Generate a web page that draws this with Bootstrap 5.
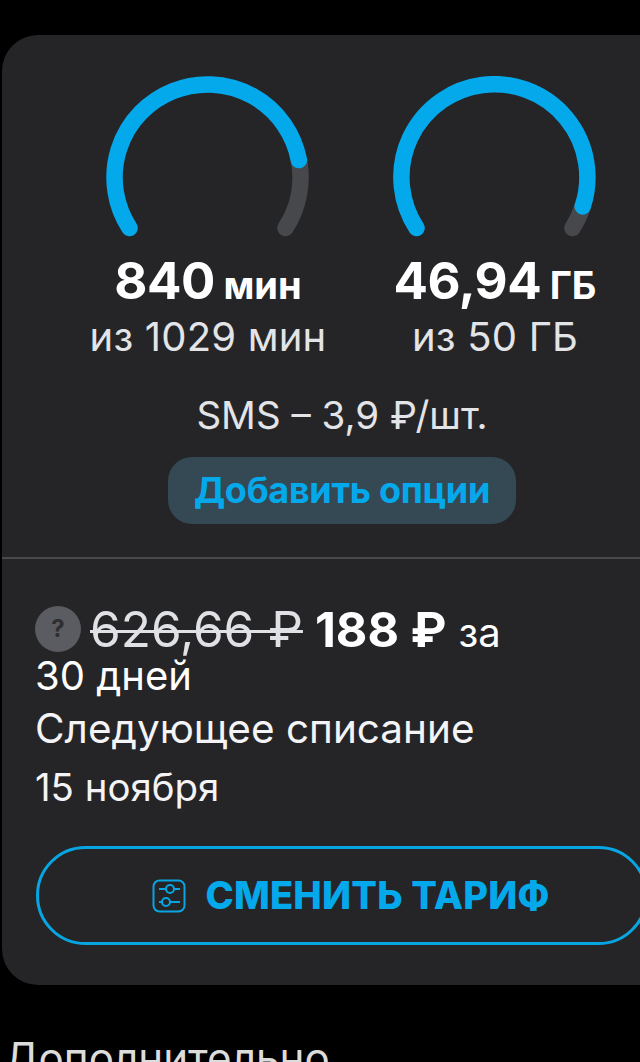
<!DOCTYPE html>
<html lang="ru">
<head>
<meta charset="utf-8">
<title>Тариф</title>
<link href="https://cdn.jsdelivr.net/npm/bootstrap@5.3.0/dist/css/bootstrap.min.css" rel="stylesheet">
<style>
html,body{background:#000;height:1062px;overflow:hidden}
body{font-family:"Inter","Noto Sans",sans-serif;color:#fff;padding-top:35px}
.tariff-panel{width:680px;margin-left:2px;height:950px;background:#252527;border-radius:36px 0 0 36px;overflow:hidden}
.gauges{padding:41px 0 0 62.5px}
.gauge-col{width:287px;text-align:center}
.gauge-svg{display:block;margin:0 auto;width:204px;height:162px}
.g-track{fill:none;stroke:#47484c;stroke-width:16.5;stroke-linecap:round}
.g-fill{fill:none;stroke:#04a9ec;stroke-width:16.5;stroke-linecap:round}
.val-line{font-weight:700;font-size:51px;line-height:50px;margin-top:18px;letter-spacing:-.5px;white-space:nowrap;word-spacing:-3px}
.val-line span{font-size:38px;letter-spacing:0}
.of-line{font-size:40px;line-height:44px;margin-top:5px;color:#e3e4e8;white-space:nowrap;letter-spacing:.2px}
.sms-line{font-size:38.5px;line-height:44px;margin-top:34px;color:#e3e4e8}
.opt-btn{display:block;width:348px;height:67px;margin:20px auto 0;padding:0;background:#344954;color:#04a9ec;font-weight:700;font-size:36px;line-height:67px;border:0;border-radius:24px;letter-spacing:-.3px;white-space:nowrap}
.divider{height:2px;background:#48494c;margin-top:33px}
.price-block{padding:47px 0 0 33px;width:520px;font-size:40px;line-height:43px}
.help-dot{display:inline-block;width:46px;height:46px;line-height:46px;border-radius:50%;background:#5b5c61;color:#2e2e31;font-size:24px;font-weight:700;text-align:center;vertical-align:10px;margin-right:9px}
.old-price{font-size:49.5px;color:#e0e1e5;text-decoration:line-through;text-decoration-thickness:3px}
.new-price{font-size:48.5px;font-weight:700;margin:0 12px}
.next-line{font-size:40.5px;line-height:46px;margin-top:9px;color:#f4f4f6;white-space:nowrap}
.date-line{font-size:38.4px;line-height:46px;margin-top:12px;color:#f4f4f6}
.switch-btn{width:612px;height:99px;margin:36px 0 0 34px;padding:0 0 0 18px;background:transparent;border:3px solid #08a5e3;border-radius:50px;color:#04a9ec;font-weight:800;font-size:38px;letter-spacing:.2px;white-space:nowrap}
.switch-btn svg{width:34px;height:34px;margin-right:19px;flex:none}
.more-title{font-size:42.2px;line-height:50px;color:#dcdcdc;margin:48px 0 0 4px;white-space:nowrap}
</style>
</head>
<body>
<div class="tariff-panel">
  <div class="gauges d-flex">
    <div class="gauge-col">
      <svg class="gauge-svg" viewBox="0 0 204 162"><path class="g-track" d="M192.9 84.1A93 93 0 0 1 179.5 152"/><path class="g-fill" d="M23.5 152A93 93 0 1 1 192.9 84.1"/></svg>
      <div class="val-line">840 <span>мин</span></div>
      <div class="of-line">из 1029 мин</div>
    </div>
    <div class="gauge-col">
      <svg class="gauge-svg" viewBox="0 0 204 162"><path class="g-track" d="M189.7 130.4A93 93 0 0 1 179.5 152"/><path class="g-fill" d="M23.5 152A93 93 0 1 1 189.7 130.4"/></svg>
      <div class="val-line">46,94 <span>ГБ</span></div>
      <div class="of-line">из 50 ГБ</div>
    </div>
  </div>
  <div class="sms-line text-center">SMS – 3,9 ₽/шт.</div>
  <button type="button" class="btn opt-btn">Добавить опции</button>
  <div class="divider"></div>
  <div class="price-block">
    <span class="help-dot">?</span><span class="old-price">626,66 ₽</span><span class="new-price">188 ₽</span>за 30 дней
    <div class="next-line">Следующее списание</div>
    <div class="date-line">15 ноября</div>
  </div>
  <button type="button" class="btn switch-btn d-flex align-items-center justify-content-center">
    <svg viewBox="0 0 34 34" fill="none" stroke="#08a5e3" stroke-width="2"><rect x="1.5" y="1.5" width="31" height="31" rx="6"/><path d="M7 10h7M22 10h6M7 23h3M18 23h10"/><circle cx="18" cy="10" r="4"/><circle cx="14" cy="23" r="4"/></svg>
    СМЕНИТЬ ТАРИФ
  </button>
</div>
<div class="more-title">Дополнительно</div>
</body>
</html>
